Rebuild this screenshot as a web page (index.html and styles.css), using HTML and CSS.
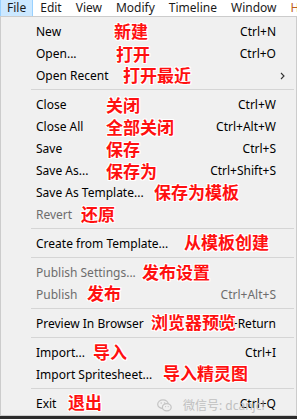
FILE: index.html
```html
<!DOCTYPE html>
<html>
<head>
<meta charset="utf-8">
<link rel="stylesheet" href="styles.css">
</head>
<body>
<div class="menubar">
  <span class="mb-item active">File</span>
  <span class="mb-item">Edit</span>
  <span class="mb-item">View</span>
  <span class="mb-item">Modify</span>
  <span class="mb-item">Timeline</span>
  <span class="mb-item">Window</span>
  <span class="mb-item next">H</span>
</div>
<div class="note note-file">文件</div>
<div class="menu">
  <div class="row"><span class="label">New</span><span class="key">Ctrl+N</span><span class="note n-new">新建</span></div>
  <div class="row"><span class="label">Open...</span><span class="key">Ctrl+O</span><span class="note n-open">打开</span></div>
  <div class="row"><span class="label">Open Recent</span><svg class="chev" width="5" height="8" viewBox="0 0 5 8"><path d="M1 1 L4 4 L1 7" fill="none" stroke="#333" stroke-width="1.1"/></svg><span class="note n-recent">打开最近</span></div>
  <div class="sep"></div>
  <div class="row"><span class="label">Close</span><span class="key">Ctrl+W</span><span class="note n-close">关闭</span></div>
  <div class="row"><span class="label">Close All</span><span class="key">Ctrl+Alt+W</span><span class="note n-closeall">全部关闭</span></div>
  <div class="row"><span class="label">Save</span><span class="key">Ctrl+S</span><span class="note n-save">保存</span></div>
  <div class="row"><span class="label">Save As...</span><span class="key">Ctrl+Shift+S</span><span class="note n-saveas">保存为</span></div>
  <div class="row"><span class="label">Save As Template...</span><span class="note n-tpl">保存为模板</span></div>
  <div class="row disabled"><span class="label">Revert</span><span class="note n-revert">还原</span></div>
  <div class="sep"></div>
  <div class="row"><span class="label">Create from Template...</span><span class="note n-create">从模板创建</span></div>
  <div class="sep"></div>
  <div class="row disabled"><span class="label">Publish Settings...</span><span class="note n-pubset">发布设置</span></div>
  <div class="row disabled"><span class="label">Publish</span><span class="key">Ctrl+Alt+S</span><span class="note n-pub">发布</span></div>
  <div class="sep"></div>
  <div class="row"><span class="label">Preview In Browser</span><span class="key">Ctrl+Return</span><span class="note n-preview">浏览器预览</span></div>
  <div class="sep"></div>
  <div class="row"><span class="label">Import...</span><span class="key">Ctrl+I</span><span class="note n-import">导入</span></div>
  <div class="row"><span class="label">Import Spritesheet...</span><span class="note n-sprite">导入精灵图</span></div>
  <div class="sep"></div>
  <div class="row"><span class="label">Exit</span><span class="key">Ctrl+Q</span><span class="note n-exit">退出</span></div>
</div>
<div class="watermark">
  <svg width="15" height="13" viewBox="0 0 15 13"><ellipse cx="6" cy="5.2" rx="5.3" ry="4.4" fill="none" stroke="#bdbdbd" stroke-width="1.2"/><ellipse cx="9.8" cy="8.2" rx="4.4" ry="3.6" fill="#f0f0f0" stroke="#bdbdbd" stroke-width="1.2"/><circle cx="4.2" cy="4" r="0.8" fill="#bdbdbd"/><circle cx="7.6" cy="4" r="0.8" fill="#bdbdbd"/><circle cx="8.6" cy="7.6" r="0.6" fill="#bdbdbd"/><circle cx="11.2" cy="7.6" r="0.6" fill="#bdbdbd"/></svg>
  <span>微信号: dcanjcl</span>
</div>
</body>
</html>
```
FILE: styles.css
```css
html, body {
  margin: 0;
  padding: 0;
}
body {
  width: 297px;
  height: 419px;
  background: #2b2b2b;
  position: relative;
  overflow: hidden;
  font-family: "Noto Sans", "Liberation Sans", sans-serif;
  font-size: 12px;
  color: #000;
}
.menubar {
  display: flex;
  height: 16px;
  background: #ffffff;
  white-space: nowrap;
  overflow: hidden;
}
.mb-item {
  padding: 0 6px 0 6px;
  line-height: 16px;
  height: 16px;
  box-sizing: border-box;
  color: #1a1a1a;
  border: 1px solid transparent;
  border-top: none;
  border-bottom: none;
}
.mb-item.active {
  background: #cce8ff;
  border-color: #99d1ff;
}
.mb-item.next {
  color: #c0601a;
}
.menu {
  background: #f0f0f0;
  border: 1px solid #cccccc;
  padding: 3px 0 1px 0;
  height: 394px;
  position: relative;
}
.row {
  position: relative;
  height: 22px;
  display: flex;
  align-items: center;
  padding: 0 20px 0 35px;
  white-space: nowrap;
}
.label {
  flex: 1;
}
.key {
  text-align: right;
}
.disabled {
  color: #6d6d6d;
}
.chev {
  position: absolute;
  right: 11px;
  top: 8px;
}
.sep {
  height: 7px;
  display: flex;
  align-items: center;
  padding: 0 2px 0 30px;
}
.sep::after {
  content: "";
  flex: 1;
  height: 1px;
  background: #d5d5d5;
}
.note {
  position: absolute;
  top: 2px;
  font-family: "Noto Sans CJK SC", sans-serif;
  font-weight: 700;
  font-size: 17px;
  line-height: 17px;
  color: #ff1010;
  text-shadow: 1px 0 #fff, -1px 0 #fff, 0 1px #fff, 0 -1px #fff, 1px 1px #fff, -1px -1px #fff, 1px -1px #fff, -1px 1px #fff;
  white-space: nowrap;
}
.note-file { left: 0; top: 16px; }
.n-new { left: 113px; }
.n-open { left: 115px; top: 3px; }
.n-recent { left: 122px; }
.n-close { left: 105px; top: 3px; }
.n-closeall { left: 105px; top: 3px; }
.n-save { left: 105px; top: 3px; }
.n-saveas { left: 105px; top: 3px; }
.n-tpl { left: 153px; }
.n-revert { left: 80px; }
.n-create { left: 183px; top: 1px; }
.n-pubset { left: 141px; }
.n-pub { left: 86px; top: 1px; }
.n-preview { left: 150px; top: 1px; }
.n-import { left: 92px; }
.n-sprite { left: 162px; top: 1px; }
.n-exit { left: 67px; top: 1px; }
.watermark {
  position: absolute;
  left: 157px;
  top: 396px;
  display: flex;
  align-items: center;
  gap: 11px;
  font-family: "Noto Sans", "Noto Sans CJK SC", sans-serif;
  font-size: 12px;
  color: #b8b8b8;
  opacity: 0.85;
  white-space: nowrap;
}
```
